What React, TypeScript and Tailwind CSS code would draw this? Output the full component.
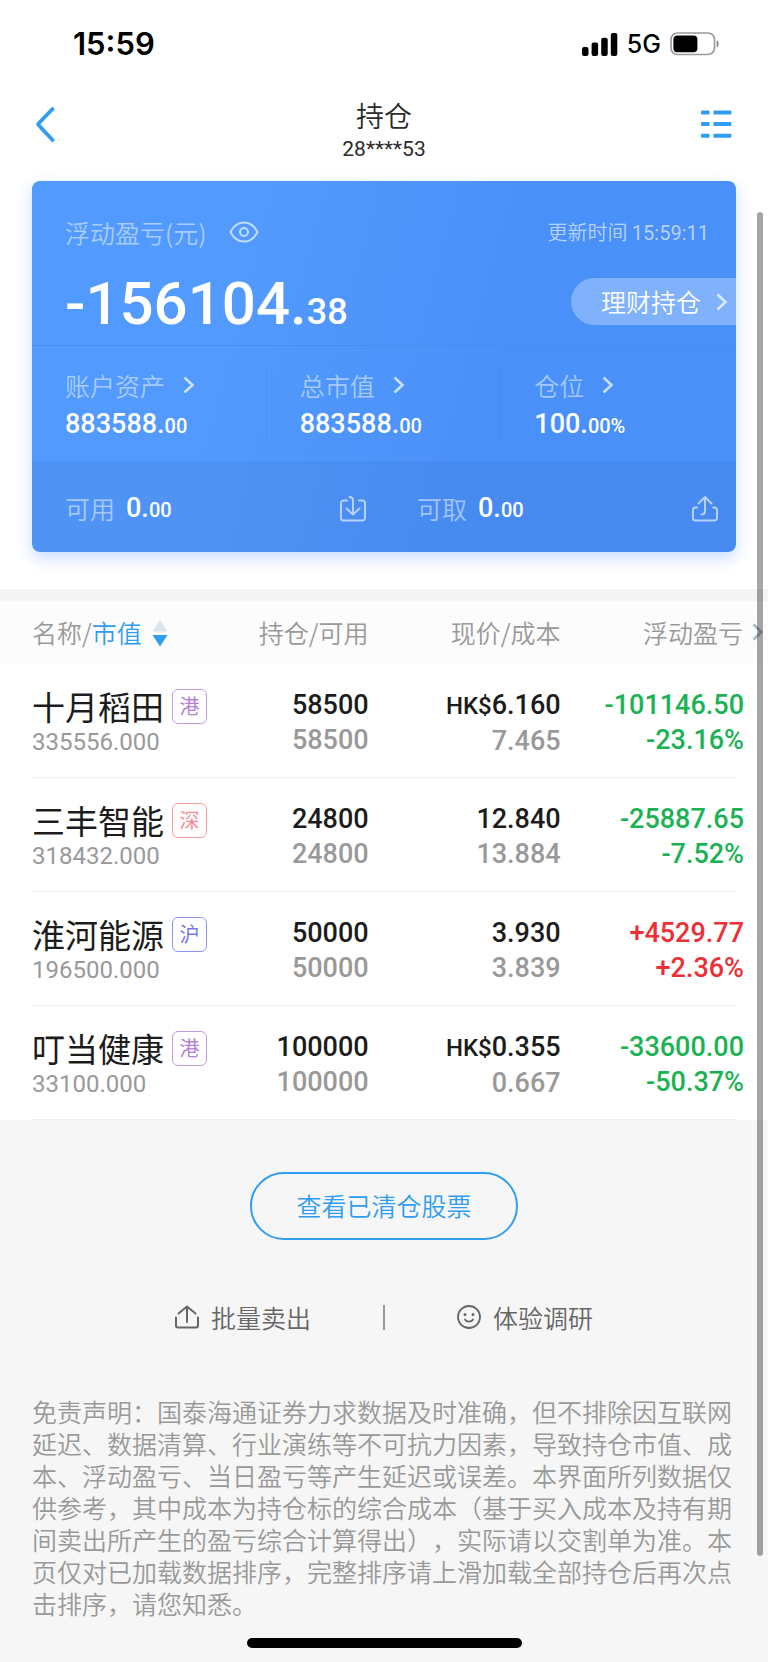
import type { ReactNode } from "react";

type Holding = {
  name: string;
  market: "港" | "深" | "沪";
  value: string;
  amount: string;
  available: string;
  price: string;
  currency?: string;
  cost: string;
  profit: string;
  rate: string;
};

const holdings: Holding[] = [
  {
    name: "十月稻田",
    market: "港",
    value: "335556.000",
    amount: "58500",
    available: "58500",
    price: "6.160",
    currency: "HK$",
    cost: "7.465",
    profit: "-101146.50",
    rate: "-23.16%",
  },
  {
    name: "三丰智能",
    market: "深",
    value: "318432.000",
    amount: "24800",
    available: "24800",
    price: "12.840",
    cost: "13.884",
    profit: "-25887.65",
    rate: "-7.52%",
  },
  {
    name: "淮河能源",
    market: "沪",
    value: "196500.000",
    amount: "50000",
    available: "50000",
    price: "3.930",
    cost: "3.839",
    profit: "+4529.77",
    rate: "+2.36%",
  },
  {
    name: "叮当健康",
    market: "港",
    value: "33100.000",
    amount: "100000",
    available: "100000",
    price: "0.355",
    currency: "HK$",
    cost: "0.667",
    profit: "-33600.00",
    rate: "-50.37%",
  },
];

const marketStyles = {
  港: "border-[#c79be0] text-[#b47fd6]",
  深: "border-[#ff9a9f] text-[#f98a90]",
  沪: "border-[#8f94f5] text-[#7378ef]",
};

const stats = [
  { label: "账户资产", whole: "883588.", rest: "00" },
  { label: "总市值", whole: "883588.", rest: "00" },
  { label: "仓位", whole: "100.", rest: "00%" },
];

const Chevron = ({ className }: { className?: string }) => (
  <svg
    viewBox="0 0 12 18"
    className={`h-[18px] w-3 shrink-0 ${className ?? ""}`}
    fill="none"
    stroke="currentColor"
    strokeWidth="2.6"
  >
    <path d="M1.5 1.5 9.5 9 1.5 16.5" />
  </svg>
);

const StatusBar = () => (
  <div className="flex h-[88px] items-center justify-between pr-[48px] pl-[73px] font-['Inter',sans-serif] text-black">
    <span className="text-[31px] leading-9 font-semibold">15:59</span>
    <div className="flex items-center gap-[9px]">
      <svg viewBox="0 0 36 23" className="h-[23px] w-9" fill="currentColor">
        <rect x="0" y="14" width="6.5" height="9" rx="2" />
        <rect x="9.6" y="9.6" width="6.5" height="13.4" rx="2" />
        <rect x="19.2" y="4.8" width="6.5" height="18.2" rx="2" />
        <rect x="28.8" y="0" width="6.5" height="23" rx="2" />
      </svg>
      <span className="text-[25px] leading-8 font-medium">5G</span>
      <svg viewBox="0 0 50 24" className="h-6 w-[50px]">
        <rect
          x="1"
          y="1"
          width="43.5"
          height="21.5"
          rx="6.5"
          fill="none"
          stroke="#9a9a9a"
          strokeWidth="1.7"
        />
        <rect x="3.4" y="3.4" width="24" height="16.8" rx="4" fill="#000" />
        <path d="M46.6 8c2.7 1.2 2.7 6.6 0 7.6z" fill="#8a8a8a" />
      </svg>
    </div>
  </div>
);

const NavBar = () => (
  <header className="flex h-[93px] items-start justify-between px-[35px]">
    <button type="button" aria-label="返回" className="mt-[18px] w-8">
      <svg
        viewBox="0 0 32 36"
        className="h-9 w-8"
        fill="none"
        stroke="#2f9df0"
        strokeWidth="3.8"
        strokeLinecap="round"
      >
        <path d="M17.5 3 2.8 18.3 17.5 34" strokeLinejoin="bevel" />
      </svg>
    </button>
    <div className="flex flex-col items-center pt-2 text-[#2b2b2b]">
      <h1 className="text-[28px] leading-[38px] font-[350]">持仓</h1>
      <span className="font-['Roboto',sans-serif] text-[21px] leading-[30px]">28****53</span>
    </div>
    <button type="button" aria-label="菜单" className="mt-[18px] w-8">
      <svg viewBox="0 0 32 36" className="h-9 w-8" fill="#2f9df0">
        <rect x="0" y="4.4" width="8.6" height="4" rx="1" />
        <rect x="12.4" y="4.4" width="18" height="4" rx="1" />
        <rect x="0" y="16" width="8.6" height="4" rx="1" />
        <rect x="12.4" y="16" width="18" height="4" rx="1" />
        <rect x="0" y="27.7" width="8.6" height="4" rx="1" />
        <rect x="12.4" y="27.7" width="18" height="4" rx="1" />
      </svg>
    </button>
  </header>
);

const Money = ({ whole, rest }: { whole: string; rest: string }) => (
  <span className="font-['Roboto',sans-serif] text-[27px] leading-10 font-medium text-white">
    {whole}
    <span className="text-[20px]">{rest}</span>
  </span>
);

const CashCell = ({ label, icon, action }: { label: string; icon: ReactNode; action: string }) => (
  <div className="flex items-center justify-between pt-1 pr-[17px] pl-[33px]">
    <div className="flex items-center gap-[11px]">
      <span className="text-[25px] font-[350] text-white/50">{label}</span>
      <Money whole="0." rest="00" />
    </div>
    <button type="button" aria-label={action} className="text-white/60">
      <svg
        viewBox="0 0 28 28"
        className="size-7"
        fill="none"
        stroke="currentColor"
        strokeWidth="2"
        strokeLinecap="round"
        strokeLinejoin="round"
      >
        {icon}
      </svg>
    </button>
  </div>
);

const SummaryCard = () => (
  <section className="mx-8 overflow-hidden rounded-lg bg-linear-105 from-[#529afd] from-30% to-[#4a90f9] to-65% shadow-[0_6px_16px_rgba(74,144,249,0.3)]">
    <div className="flex h-[165px] justify-between border-b border-[#488cee] pt-8 pl-[33px]">
      <div>
        <div className="flex items-center gap-[22px] text-white/50">
          <h2 className="text-[25px] leading-[38px] font-[350]">浮动盈亏(元)</h2>
          <button type="button" aria-label="隐藏金额" className="text-white/65">
            <svg
              viewBox="0 0 30 22"
              className="h-[22px] w-[30px]"
              fill="none"
              stroke="currentColor"
              strokeWidth="2"
            >
              <path d="M1.5 11C4.800 4.600 9.500 1.400 15 1.400S25.200 4.600 28.500 11C25.200 17.400 20.500 20.600 15 20.600S4.800 17.400 1.500 11z" />
              <circle cx="15" cy="11" r="4" />
            </svg>
          </button>
        </div>
        <p className="mt-[13px] font-['Roboto',sans-serif] text-[60px] leading-[80px] font-medium text-white">
          -156104.<span className="text-[36px]">38</span>
        </p>
      </div>
      <div className="flex flex-col items-end">
        <p className="pr-[27px] text-[20px] leading-[38px] font-[350] text-white/60">
          更新时间 <span className="font-['Roboto',sans-serif] font-normal">15:59:11</span>
        </p>
        <button
          type="button"
          className="mt-[26px] flex h-[47px] items-center gap-[15px] rounded-l-full bg-white/30 pr-2 pl-[30px] text-[25px] font-[350] text-white"
        >
          理财持仓
          <Chevron className="text-white/70" />
        </button>
      </div>
    </div>
    <div className="grid h-[115px] grid-cols-3 py-6">
      {stats.map((stat) => (
        <div
          key={stat.label}
          className="flex flex-col border-r border-dotted border-[#3f82e6]/60 pl-[33px] last:border-r-0"
        >
          <a href="#" className="-mt-1 flex items-center gap-[18px] text-[25px] leading-[38px] font-[350] text-white/50">
            {stat.label}
            <Chevron className="text-white/70" />
          </a>
          <Money whole={stat.whole} rest={stat.rest} />
        </div>
      ))}
    </div>
    <div className="grid h-[91px] grid-cols-2 bg-black/[0.035]">
      <CashCell
        label="可用"
        action="转入"
        icon={
          <>
            <path d="M8 5.500H4.500A2.500 2.500 0 0 0 2 8V23A2.500 2.500 0 0 0 4.500 25.500H23.500A2.500 2.500 0 0 0 26 23V8A2.500 2.500 0 0 0 23.500 5.500H20" />
            <path d="M10.500 2C13 2 14 3 14 5.500V19M7.500 13.500 14 19.500 20.500 13.500" />
          </>
        }
      />
      <CashCell
        label="可取"
        action="转出"
        icon={
          <>
            <path d="M6 12.500H4.500A2.500 2.500 0 0 0 2 15V23A2.500 2.500 0 0 0 4.500 25.500H23.500A2.500 2.500 0 0 0 26 23V15A2.500 2.500 0 0 0 23.500 12.500H22" />
            <path d="M10.500 19.500C13 19.500 14 18.500 14 16V3M7.500 8.500 14 2 20.500 8.500" />
          </>
        }
      />
    </div>
  </section>
);

const HoldingRow = ({ item }: { item: Holding }) => (
  <tr className="relative h-[114px] align-top">
    <td className="pt-6 pl-8">
      <div className="flex h-9 items-center gap-2 whitespace-nowrap">
        <span className="text-[33px] leading-9 text-[#1c1c1c]">{item.name}</span>
        <span
          className={`flex size-[35px] shrink-0 items-center justify-center rounded-md border text-[20px] leading-none ${marketStyles[item.market]}`}
        >
          {item.market}
        </span>
      </div>
      <p className="font-['Roboto',sans-serif] text-[24px] leading-9 text-[#999]">{item.value}</p>
      {/* row divider */}
      <span className="absolute right-8 bottom-0 left-8 h-px bg-[#f0f0f0]" />
    </td>
    <td className="pt-6 text-right font-['Roboto',sans-serif] text-[27px] leading-[35px] font-medium">
      <p className="text-[#1c1c1c]">{item.amount}</p>
      <p className="text-[#999]">{item.available}</p>
    </td>
    <td className="pt-6 text-right font-['Roboto',sans-serif] text-[27px] leading-[35px] font-medium">
      <p className="text-[#1c1c1c]">
        {item.currency && <span className="text-[24px]">{item.currency}</span>}
        {item.price}
      </p>
      <p className="text-[#999]">{item.cost}</p>
    </td>
    <td
      className={`pt-6 pr-6 text-right font-['Roboto',sans-serif] text-[27px] leading-[35px] font-medium ${
        item.profit.startsWith("+") ? "text-[#ee2f35]" : "text-[#1bb254]"
      }`}
    >
      <p>{item.profit}</p>
      <p>{item.rate}</p>
    </td>
  </tr>
);

const HoldingsTable = () => (
  <section className="mt-[37px] border-t-[12px] border-[#f5f5f5]">
    <table className="w-full table-fixed">
      <thead className="bg-[#fcfcfc] text-[25px] text-[#999]">
        <tr className="h-[63px]">
          <th className="w-[30%] pl-8 text-left font-[350]">
            <button type="button" className="flex items-center gap-[10px] whitespace-nowrap">
              <span>
                名称/<span className="text-[#2f9df0]">市值</span>
              </span>
              <svg viewBox="0 0 16 28" className="h-7 w-4">
                <path d="M8 1 15.500 12.500H.5z" fill="#dbe4ec" />
                <path d="M8 27.500 15.500 16H.5z" fill="#2f9df0" />
              </svg>
            </button>
          </th>
          <th className="w-[18%] text-right font-[350] whitespace-nowrap">持仓/可用</th>
          <th className="w-[25%] text-right font-[350] whitespace-nowrap">现价/成本</th>
          <th className="relative pr-[25px] text-right font-[350] whitespace-nowrap">
            浮动盈亏
            <Chevron className="absolute top-[22px] right-[4px] text-[#a9b9cc]" />
          </th>
        </tr>
      </thead>
      <tbody>
        {holdings.map((item) => (
          <HoldingRow key={item.name} item={item} />
        ))}
      </tbody>
    </table>
  </section>
);

const Footer = () => (
  <footer className="flex flex-col items-center bg-[#f6f6f6] px-8 pt-[52px] pb-[14px]">
    <button
      type="button"
      className="h-[68px] rounded-full border-2 border-[#2f9df0] px-11 text-[25px] font-[350] text-[#2f9df0]"
    >
      查看已清仓股票
    </button>
    <div className="mt-[58px] flex items-center justify-center gap-[72px] text-[25px] leading-[38px] font-[350] text-[#666]">
      <button type="button" className="flex items-center gap-3">
        <svg
          viewBox="0 0 24 26"
          className="h-[26px] w-6"
          fill="none"
          stroke="currentColor"
          strokeWidth="2"
          strokeLinecap="round"
          strokeLinejoin="round"
        >
          <path d="M1 13.500V21.500A2 2 0 0 0 3 23.500H21A2 2 0 0 0 23 21.500V13.500M12 18V2.500M3.500 9.500 12 2.500 20.500 9.500" />
        </svg>
        批量卖出
      </button>
      <span className="h-[25px] w-[2px] bg-[#999]" />
      <button type="button" className="flex items-center gap-3">
        <svg
          viewBox="0 0 24 24"
          className="size-6"
          fill="none"
          stroke="currentColor"
          strokeWidth="1.800"
          strokeLinecap="round"
        >
          <circle cx="12" cy="12" r="11" />
          <path d="M8 14.500C9.500 17.300 14.500 17.300 16 14.500" />
          <circle cx="8" cy="9.500" r="0.600" fill="currentColor" />
          <circle cx="16" cy="9.500" r="0.600" fill="currentColor" />
        </svg>
        体验调研
      </button>
    </div>
    <p className="mt-[59px] w-full text-[25px] leading-8 font-[350] text-[#999] [text-spacing-trim:space-all]">
      免责声明：国泰海通证券力求数据及时准确，但不排除因互联网延迟、数据清算、行业演练等不可抗力因素，导致持仓市值、成本、浮动盈亏、当日盈亏等产生延迟或误差。本界面所列数据仅供参考，其中成本为持仓标的综合成本（基于买入成本及持有期间卖出所产生的盈亏综合计算得出），实际请以交割单为准。本页仅对已加载数据排序，完整排序请上滑加载全部持仓后再次点击排序，请您知悉。
    </p>
    {/* home indicator */}
    <div className="mt-[19px] h-[10px] w-[275px] rounded-full bg-black" />
  </footer>
);

const App = () => {
  return (
    <main
      lang="zh-CN"
      className="relative w-full bg-white font-['Noto_Sans_CJK_SC',sans-serif]"
    >
      <StatusBar />
      <NavBar />
      <SummaryCard />
      <HoldingsTable />
      <Footer />
      {/* scroll position */}
      <div className="absolute top-[212px] right-[5px] bottom-[106px] w-[6px] rounded-full bg-black/35" />
    </main>
  );
};

export default App;
